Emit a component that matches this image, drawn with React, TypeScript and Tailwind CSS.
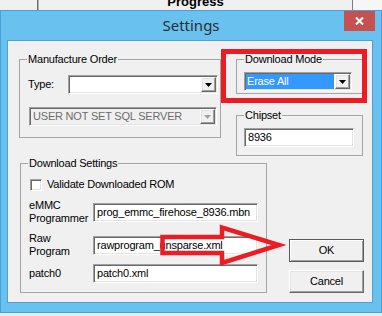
import React from 'react';

const sunken =
  'border border-t-[#a0a0a0] border-l-[#a0a0a0] border-r-white border-b-white shadow-[inset_1px_1px_0_#696969,inset_-1px_-1px_0_#e3e3e3]';
const raised =
  'border border-t-white border-l-white border-r-[#696969] border-b-[#696969] shadow-[inset_-1px_-1px_0_#a0a0a0,inset_1px_1px_0_#e3e3e3] bg-[#f0f0f0]';

const Caret: React.FC<{ color?: string }> = ({ color = '#000' }) => (
  <svg width="7" height="4" viewBox="0 0 7 4">
    <polygon points="0,0 7,0 3.5,4" fill={color} />
  </svg>
);

const Group: React.FC<{ title: string; className: string; children?: React.ReactNode }> = ({ title, className, children }) => (
  <fieldset className={`border border-[#a5a5a5] ${className}`}>
    <legend className="ml-[7px] px-[1px] leading-[13px] text-black">{title}</legend>
    {children}
  </fieldset>
);

const Combo: React.FC<{ className: string; disabled?: boolean; children?: React.ReactNode }> = ({ className, disabled, children }) => (
  <div className={`flex ${sunken} ${disabled ? 'bg-[#f0f0f0]' : 'bg-white'} ${className}`}>
    <div className="flex-1 flex items-center overflow-hidden pl-[1px] py-[1px]">{children}</div>
    <div className={`w-[15px] flex items-center justify-center ${raised} m-[1px]`}>
      <Caret color={disabled ? '#a0a0a0' : '#000'} />
    </div>
  </div>
);

const Field: React.FC<{ value: string; className: string }> = ({ value, className }) => (
  <div className={`bg-white flex items-center pl-[3px] text-black ${sunken} ${className}`}>{value}</div>
);

const Button: React.FC<{ label: string; isDefault?: boolean; className?: string }> = ({ label, isDefault, className = '' }) => (
  <div
    className={`h-[23px] w-[75px] flex items-center justify-center text-black ${
      isDefault
        ? 'border border-[#5a5a5a] bg-[#f0f0f0] shadow-[inset_1px_1px_0_#ffffff,inset_-1px_-1px_0_#a0a0a0]'
        : raised
    } ${className}`}
  >
    {label}
  </div>
);

export default function App() {
  return (
    <div className="relative w-[382px] h-[316px] overflow-hidden bg-[#e6ede6] font-['Liberation_Sans',Arial,sans-serif] text-[11px] leading-[13px] tracking-[-0.2px]">
      {/* grid header behind the dialog */}
      <div className="flex h-[10px] overflow-hidden">
        <div className="w-[37px] bg-[#f0f0f0]" />
        <div className="w-[1px] bg-[#6e6e6e]" />
        <div className="w-[1px] bg-[#b0b0b0]" />
        <div className="flex-1 flex justify-center bg-[#f0f0f0]">
          <span className="-mt-[5px] text-[13px] font-bold leading-[13px] tracking-normal text-black">Progress</span>
        </div>
        <div className="w-[1px] bg-[#7a7a7a]" />
        <div className="w-[29px] bg-[#f6f6f6]" />
      </div>

      {/* dialog */}
      <div className="flex flex-col w-[382px] h-[303px] bg-[#69c1ef] border border-[#4a9fd6]">
        <div className="flex h-[29px]">
          <div className="flex-1" />
          <div className="flex items-center font-['Noto_Sans',sans-serif] text-[15px] tracking-normal text-[#2e2e2e]">Settings</div>
          <div className="flex-1 flex justify-end items-start">
            <div className="mr-[6px] w-[31px] h-[20px] bg-[#c75050] flex items-center justify-center">
              <svg width="9" height="8" viewBox="0 0 9 8">
                <path d="M1 0.5 L8 7.5 M8 0.5 L1 7.5" stroke="#fff" strokeWidth="2" />
              </svg>
            </div>
          </div>
        </div>

        <div className="ml-[6px] w-[366px] h-[263px] bg-[#f0f0f0] border border-[#519fd2] flex flex-col">
          {/* top row */}
          <div className="flex items-start mt-[12px]">
            <Group title="Manufacture Order" className="ml-[11px] w-[202px] h-[85px]">
              <div className="flex items-center mt-[9px] pl-[8px]">
                <span className="w-[40px]">Type:</span>
                <Combo className="w-[150px] h-[19px]" />
              </div>
              <Combo disabled className="ml-[9px] mt-[13px] w-[188px] h-[19px]">
                <span className="pl-[2px] text-[#6d6d6d] whitespace-nowrap">USER NOT SET SQL SERVER</span>
              </Combo>
            </Group>

            <div className="ml-[15px] w-[127px] flex flex-col">
              <Group title="Download Mode" className="h-[41px]">
                <Combo className="ml-[7px] mt-[6px] w-[108px] h-[19px]">
                  <span className="flex-1 h-full flex items-center bg-[#3399ff] text-white pl-[1px]">Erase All</span>
                </Combo>
              </Group>
              <Group title="Chipset" className="mt-[15px] h-[47px]">
                <Field value="8936" className="ml-[7px] mt-[6px] w-[110px] h-[19px]" />
              </Group>
            </div>
          </div>

          {/* bottom row */}
          <div className="flex items-start mt-[1px]">
            <Group title="Download Settings" className="ml-[12px] w-[247px] h-[136px]">
              <div className="flex items-center mt-[8px] pl-[9px]">
                <div className={`w-[12px] h-[12px] bg-white ${sunken}`} />
                <span className="ml-[5px]">Validate Downloaded ROM</span>
              </div>
              <div className="flex items-center mt-[8px] pl-[8px]">
                <span className="w-[64px]">
                  eMMC
                  <br />
                  Programmer
                </span>
                <Field value="prog_emmc_firehose_8936.mbn" className="w-[165px] h-[19px]" />
              </div>
              <div className="flex items-center mt-[7px] pl-[8px]">
                <span className="w-[64px]">
                  Raw
                  <br />
                  Program
                </span>
                <Field value="rawprogram_unsparse.xml" className="w-[165px] h-[19px]" />
              </div>
              <div className="flex items-center mt-[6px] pl-[8px]">
                <span className="w-[64px]">patch0</span>
                <Field value="patch0.xml" className="w-[165px] h-[19px]" />
              </div>
            </Group>

            <div className="ml-[22px] flex flex-col">
              <Button label="OK" isDefault className="mt-[82px]" />
              <Button label="Cancel" className="mt-[8px]" />
            </div>
          </div>
        </div>
      </div>

      {/* annotations */}
      <div className="absolute left-[221px] top-[49px] w-[146px] h-[54px] border-[5px] border-[#ed1c24]" />
      <svg className="absolute left-0 top-0" width="382" height="316" viewBox="0 0 382 316">
        <polygon
          points="162.5,237 222,237 222,227.5 279,245 222,263 222,253 162.5,253"
          fill="none"
          stroke="#ed1c24"
          strokeWidth="4.5"
          strokeLinejoin="miter"
        />
      </svg>
    </div>
  );
}
